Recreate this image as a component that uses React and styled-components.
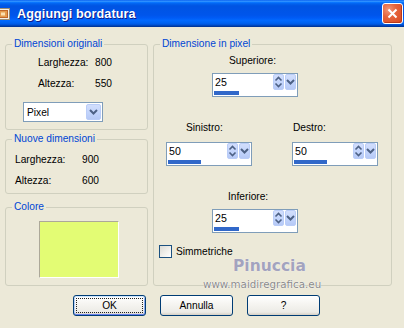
import React from "react";
import styled, { createGlobalStyle } from "styled-components";

const GlobalStyle = createGlobalStyle`
  html, body {
    margin: 0;
    padding: 0;
    background: #ece9d8;
  }
  * {
    box-sizing: border-box;
  }
`;

const Window = styled.div`
  position: relative;
  width: 404px;
  height: 328px;
  overflow: hidden;
  background: #ece9d8;
  font-family: "Liberation Sans", Arial, sans-serif;
  font-size: 10.2px;
  color: #000;
`;

const TitleBar = styled.div`
  height: 27px;
  display: flex;
  align-items: center;
  padding-right: 1px;
  background: linear-gradient(
    180deg,
    #0058ee 0%,
    #3593ff 4%,
    #288eff 6%,
    #127dff 8%,
    #036ffc 10%,
    #0262ee 14%,
    #0057e5 20%,
    #0054e3 24%,
    #0055eb 56%,
    #005bf5 66%,
    #026afe 76%,
    #0062ef 86%,
    #0052d6 92%,
    #0040ab 96%,
    #003092 100%
  );
`;

const Title = styled.div`
  flex: 1;
  margin-left: 6px;
  padding-top: 1px;
  color: #fff;
  font-weight: bold;
  font-size: 12.6px;
  letter-spacing: 0.1px;
  text-shadow: 1px 1px 0 #0f1c8a;
`;

const CloseButton = styled.div`
  width: 21px;
  height: 21px;
  display: flex;
  align-items: center;
  justify-content: center;
  border: 1px solid #fff;
  border-radius: 3px;
  background: radial-gradient(
    circle at 30% 30%,
    #f1977a 0%,
    #e5643c 40%,
    #d9481f 100%
  );
  box-shadow: inset -1px -1px 0 #b8391a;
`;

const Body = styled.div`
  padding: 11px 0 0 5px;
`;

const Columns = styled.div`
  display: flex;
  align-items: flex-start;
  gap: 5px;
`;

const LeftColumn = styled.div`
  width: 143px;
  display: flex;
  flex-direction: column;
`;

const Group = styled.fieldset`
  margin: ${(p) => p.$mt || 0}px 0 0;
  padding: 0;
  width: ${(p) => p.$w}px;
  height: ${(p) => p.$h}px;
  min-width: 0;
  border: 1px solid #d0d0bf;
  border-radius: 3px;
`;

const Legend = styled.legend`
  margin-left: 6px;
  padding: 0 2px;
  color: #0046d5;
  font-size: 10.2px;
  line-height: 12px;
`;

const InfoGrid = styled.div`
  display: grid;
  grid-template-columns: ${(p) => p.$col}px auto;
  row-gap: 8px;
  padding: ${(p) => p.$pt}px 0 0 ${(p) => p.$pl}px;
  line-height: 13px;
`;

const Select = styled.div`
  width: 80px;
  height: 20px;
  margin: 12px 0 0 17px;
  padding: 1px;
  display: flex;
  align-items: center;
  background: #fff;
  border: 1px solid #7f9db9;
`;

const SelectText = styled.span`
  flex: 1;
  padding-left: 2px;
`;

const ArrowButton = styled.span`
  width: ${(p) => p.$w}px;
  height: 16px;
  display: flex;
  align-items: center;
  justify-content: center;
  border: 1px solid #bacdf8;
  border-radius: 2px;
  background: linear-gradient(180deg, #d2defc 0%, #c1d3fb 60%, #b6c9f6 100%);
`;

const Swatch = styled.div`
  width: 80px;
  height: 57px;
  margin: 8px 0 0 33px;
  background: #e3fc74;
  border-top: 1px solid #aca899;
  border-left: 1px solid #aca899;
  border-right: 1px solid #fff;
  border-bottom: 1px solid #fff;
`;

const RightBody = styled.div`
  display: flex;
  flex-direction: column;
  padding-top: 4px;
`;

const SpinBlock = styled.div`
  display: flex;
  flex-direction: column;
  margin: ${(p) => p.$mt || 0}px 0 0 ${(p) => p.$ml || 0}px;
`;

const FieldLabel = styled.div`
  line-height: 13px;
  padding-left: ${(p) => p.$offset}px;
  margin-bottom: ${(p) => p.$gap}px;
`;

const SpinBox = styled.div`
  width: 86px;
  height: 24px;
  display: flex;
  flex-direction: column;
  padding: 0 1px 1px 1px;
  background: #fff;
  border: 1px solid #7f9db9;
`;

const SpinTop = styled.div`
  height: 16px;
  display: flex;
  align-items: center;
  gap: 1px;
`;

const SpinValue = styled.span`
  flex: 1;
  padding-left: 1px;
  font-size: 10.6px;
`;

const ProgressBar = styled.div`
  width: ${(p) => p.$w}px;
  height: 4px;
  margin-top: 1px;
  background: #3168c9;
`;

const SideRow = styled.div`
  display: flex;
  gap: 40px;
  margin: 24px 0 0 12px;
`;

const CheckRow = styled.label`
  display: flex;
  align-items: center;
  gap: 4px;
  margin: 12px 0 0 5px;
  line-height: 13px;
`;

const CheckBox = styled.span`
  width: 13px;
  height: 13px;
  border: 1px solid #1c5180;
  background: linear-gradient(135deg, #dcdbd5 0%, #f3f2ee 60%, #ffffff 100%);
`;

const ButtonRow = styled.div`
  display: flex;
  gap: 14px;
  margin: 9px 0 0 68px;
`;

const Button = styled.button`
  position: relative;
  width: 73px;
  height: 21px;
  padding: 0;
  border: 1px solid #003c74;
  border-radius: 3px;
  font-family: "Liberation Sans", Arial, sans-serif;
  font-size: 10.2px;
  color: #000;
  background: linear-gradient(180deg, #ffffff 0%, #f5f4f0 45%, #ecebe6 85%, #d6d0c5 100%);
  box-shadow: ${(p) =>
    p.$default
      ? "inset 0 1px 0 #cee7ff, inset 0 -1px 0 #6982ee, inset 1px 0 0 #b8d0f6, inset -1px 0 0 #8aaaf0"
      : "none"};
  &::after {
    content: "";
    display: ${(p) => (p.$default ? "block" : "none")};
    position: absolute;
    inset: 2px;
    border: 1px dotted #222;
  }
`;

const Watermark = styled.div`
  position: absolute;
  left: 233px;
  top: 257px;
  font-family: "DejaVu Sans", Verdana, sans-serif;
  font-weight: bold;
  font-size: 15.5px;
  line-height: 18px;
  color: #a3a3be;
  text-shadow: 0 0 1px #ffffff;
`;

const WatermarkUrl = styled.div`
  position: absolute;
  left: 203px;
  top: 278px;
  font-family: "DejaVu Sans", Verdana, sans-serif;
  font-size: 10.3px;
  line-height: 12px;
  color: #8a8a8a;
  text-shadow: 0 0 1px #ffffff, 0 0 1px #ffffff;
`;

const Chevron = ({ up, y }) => (
  <path
    d={up ? `M2.5 ${y + 3} L5.5 ${y} L8.5 ${y + 3}` : `M2.5 ${y} L5.5 ${y + 3} L8.5 ${y}`}
    stroke="#4d6185"
    strokeWidth="1.6"
    fill="none"
  />
);

const UpDownButton = () => (
  <ArrowButton $w={11}>
    <svg width="9" height="14" viewBox="1 0 9 14">
      <Chevron up y={2.5} />
      <Chevron y={8.5} />
    </svg>
  </ArrowButton>
);

const DropButton = ({ w = 11 }) => (
  <ArrowButton $w={w}>
    <svg width="9" height="8" viewBox="1 1 9 8">
      <path d="M2 3 L5.5 6.5 L9 3" stroke="#4d6185" strokeWidth="2" fill="none" />
    </svg>
  </ArrowButton>
);

const SpinField = ({ label, value, bar, labelOffset, gap, mt, ml }) => (
  <SpinBlock $mt={mt} $ml={ml}>
    <FieldLabel $offset={labelOffset} $gap={gap}>
      {label}
    </FieldLabel>
    <SpinBox>
      <SpinTop>
        <SpinValue>{value}</SpinValue>
        <UpDownButton />
        <DropButton />
      </SpinTop>
      <ProgressBar $w={bar} />
    </SpinBox>
  </SpinBlock>
);

const WindowIcon = () => (
  <svg width="11" height="14" viewBox="5 1 11 14">
    <rect x="1.5" y="2.5" width="13" height="11" fill="#f4f1e8" stroke="#9a8c74" />
    <rect x="3.5" y="4.5" width="9" height="7" fill="#e59a4c" stroke="#c0672a" />
    <rect x="6" y="6.5" width="4" height="3" fill="#fbe0b0" />
  </svg>
);

export default function App() {
  return (
    <>
      <GlobalStyle />
      <Window>
        <TitleBar>
          <WindowIcon />
          <Title>Aggiungi bordatura</Title>
          <CloseButton>
            <svg width="11" height="11" viewBox="0 0 11 11">
              <path d="M1.5 1.5 L9.5 9.5 M9.5 1.5 L1.5 9.5" stroke="#fff" strokeWidth="2" />
            </svg>
          </CloseButton>
        </TitleBar>
        <Body>
          <Columns>
            <LeftColumn>
              <Group $w={143} $h={92}>
                <Legend>Dimensioni originali</Legend>
                <InfoGrid $pt={6} $pl={32} $col={57}>
                  <span>Larghezza:</span>
                  <span>800</span>
                  <span>Altezza:</span>
                  <span>550</span>
                </InfoGrid>
                <Select>
                  <SelectText>Pixel</SelectText>
                  <DropButton w={15} />
                </Select>
              </Group>
              <Group $w={143} $h={61} $mt={3}>
                <Legend>Nuove dimensioni</Legend>
                <InfoGrid $pt={8} $pl={9} $col={67}>
                  <span>Larghezza:</span>
                  <span>900</span>
                  <span>Altezza:</span>
                  <span>600</span>
                </InfoGrid>
              </Group>
              <Group $w={143} $h={85} $mt={7}>
                <Legend>Colore</Legend>
                <Swatch />
              </Group>
            </LeftColumn>
            <Group $w={239} $h={248}>
              <Legend>Dimensione in pixel</Legend>
              <RightBody>
                <SpinField label="Superiore:" value="25" bar={25} labelOffset={17} gap={6} ml={58} />
                <SideRow>
                  <SpinField label="Sinistro:" value="50" bar={33} labelOffset={20} gap={8} />
                  <SpinField label="Destro:" value="50" bar={33} labelOffset={1} gap={8} />
                </SideRow>
                <SpinField label="Inferiore:" value="25" bar={25} labelOffset={16} gap={6} mt={24} ml={58} />
                <CheckRow>
                  <CheckBox />
                  <span>Simmetriche</span>
                </CheckRow>
              </RightBody>
            </Group>
          </Columns>
          <ButtonRow>
            <Button $default>OK</Button>
            <Button>Annulla</Button>
            <Button>?</Button>
          </ButtonRow>
        </Body>
        <Watermark>Pinuccia</Watermark>
        <WatermarkUrl>www.maidiregrafica.eu</WatermarkUrl>
      </Window>
    </>
  );
}
